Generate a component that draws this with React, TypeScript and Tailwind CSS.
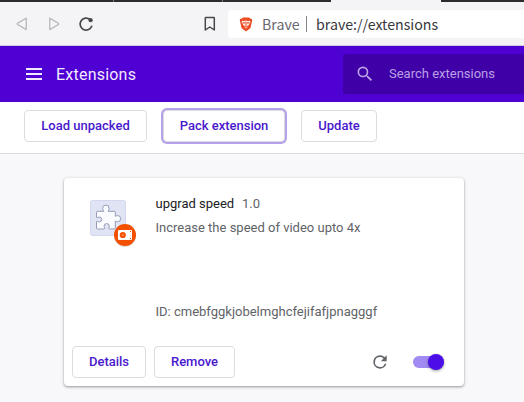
import type { ReactNode } from 'react';

function ActionButton({ children, className = '' }: { children: ReactNode; className?: string }) {
  return (
    <button
      className={`flex h-8 items-center justify-center whitespace-nowrap rounded border border-[#dadce0] bg-white text-[13px] font-medium text-[#4918ce] ${className}`}
    >
      {children}
    </button>
  );
}

function BrowserBar() {
  return (
    <div className="flex h-[46px] flex-col border-b border-[#cfcbe6] bg-[#f4f4f7]">
      <div className="flex h-[2px] shrink-0 bg-[#2c2b2d]">
        <div className="ml-[113px] w-px bg-[#777]" />
        <div className="ml-[108px] w-px bg-[#777]" />
        <div className="ml-[108px] w-[110px] bg-[#f4f4f7]" />
      </div>
      <div className="flex flex-1 items-start pt-2">
        <div className="flex h-7 items-center pl-4">
          <svg width="12" height="14" viewBox="0 0 12 14" fill="none" stroke="#bdbdbf" strokeWidth="1.4" strokeLinejoin="round">
            <path d="M10.3 1.2v11.4L1.8 7.7c-.7-.4-.7-1.1 0-1.5z" />
          </svg>
          <svg className="ml-5" width="12" height="14" viewBox="0 0 12 14" fill="none" stroke="#bdbdbf" strokeWidth="1.4" strokeLinejoin="round">
            <path d="M1.7 1.2v11.4l8.5-4.9c.7-.4.7-1.1 0-1.5z" />
          </svg>
          <svg className="ml-[18px]" width="16" height="16" viewBox="0 0 16 16" fill="none">
            <path d="M12 3.5A6 6 0 1 0 13.7 10.3" stroke="#48484b" strokeWidth="1.7" strokeLinecap="round" />
            <circle cx="12.6" cy="4.2" r="2.1" fill="#48484b" />
          </svg>
          <svg className="ml-[110px]" width="12" height="16" viewBox="0 0 12 16" fill="none">
            <path d="M1.9 1.4h7.8c.4 0 .6.2.6.6v12L5.8 11l-4.5 3V2c0-.4.2-.6.6-.6z" stroke="#48484b" strokeWidth="1.5" strokeLinejoin="round" />
          </svg>
        </div>
        <div className="ml-3 flex h-7 flex-1 items-center rounded-l bg-white pl-[11px] font-['Noto_Sans_CJK_SC',sans-serif] text-[14.2px] leading-7">
          <svg width="14" height="15" viewBox="0 0 14 15">
            <path d="M3.8.5h6.4l1.1 1.2 1.2-.1.8 1.8-.4 1L11.5 11 7 14.5 2.5 11 1.1 4.4l-.4-1 .8-1.8 1.2.1z" fill="#ed4b24" />
            <path d="M3.3 3.7l2 .2L7 3.4l1.7.5 2-.2.8 1.3-1.5 2 .1 1-2.1 1 .5 1L7 11.4 5.5 10l.5-1-2.1-1 .1-1-1.5-2z" fill="#fff" opacity=".9" />
            <path d="M3.7 5l2.4.6-.4 1.1-1.3-.2zM10.3 5l-2.4.6.4 1.1 1.3-.2zM6.3 4.7h1.4L7.4 7.5 8 8.5H6l.6-1zM5.8 9.7L7 9.1l1.2.6L7 10.8z" fill="#ed4b24" />
          </svg>
          <span className="ml-[9px] w-9 whitespace-nowrap text-[#67676c]">Brave</span>
          <div className="ml-2 h-4 w-px bg-[#85858a]" />
          <span className="ml-[9px] whitespace-nowrap text-[#38383d]">brave://extensions</span>
        </div>
      </div>
    </div>
  );
}

function Header() {
  return (
    <header className="flex h-14 items-center bg-[#4f00d2] pl-[26px]">
      <svg width="16" height="12" viewBox="0 0 16 12" fill="#f2eaff">
        <path d="M0 0h16v2H0zM0 5h16v2H0zM0 10h16v2H0z" />
      </svg>
      <h1 className="ml-[14px] w-[287px] pt-0.5 text-base font-normal tracking-[0.22px] text-[#f2eaff]">Extensions</h1>
      <div className="flex h-10 flex-1 items-center rounded-l-[2px] bg-[#3f00a8] pl-3">
        <svg width="20" height="20" viewBox="0 0 24 24" fill="#bfa4e8">
          <path d="M15.5 14h-.79l-.28-.27A6.47 6.47 0 0 0 16 9.5 6.5 6.5 0 1 0 9.5 16c1.61 0 3.09-.59 4.23-1.57l.27.28v.79l5 4.99L20.49 19zm-6 0a4.5 4.5 0 1 1 0-9 4.5 4.5 0 0 1 0 9z" />
        </svg>
        <span className="ml-[14px] whitespace-nowrap text-[13px] text-[#bba1e4]">Search extensions</span>
      </div>
    </header>
  );
}

function ExtensionIcon() {
  return (
    <svg className="mt-[18px] ml-[25px] shrink-0" width="50" height="52" viewBox="0 0 50 52">
      <rect x="1.5" y="4.5" width="35" height="35" rx="2" fill="#e0e4f5" stroke="#d1d7ee" />
      <path
        d="M8.3 15.3h6.4c-.8-1-1-2-1-3a3.2 3.2 0 0 1 6.4 0c0 1-.2 2-1 3h6.4c.5 0 .8.3.8.8v4.2c.8-.5 1.4-.7 2.3-.7a3 3 0 0 1 0 6.1c-.9 0-1.5-.2-2.3-.7v7.2c0 .5-.3.8-.8.8h-5.1c-.8 0-.9-.5-.6-1.1.4-.8.5-1.1.5-1.7a2.6 2.6 0 0 0-5.2 0c0 .6.1.9.5 1.7.3.6.2 1.1-.6 1.1H8.3c-.5 0-.8-.3-.8-.8V26c0-.8.5-.9 1.1-.6.8.4 1.1.5 1.7.5a2.4 2.4 0 0 0 0-4.8c-.6 0-.9.1-1.7.5-.6.3-1.1.2-1.1-.6v-4.9c0-.5.3-.8.8-.8z"
        fill="#fafbff"
        stroke="#959cb5"
        strokeWidth="1"
        strokeLinejoin="round"
      />
      <circle cx="36" cy="40" r="11" fill="#000" opacity=".13" />
      <circle cx="36" cy="39" r="11" fill="#f35000" />
      <rect x="29" y="34" width="14" height="10" rx="1" fill="#fff" />
      <circle cx="33.8" cy="39" r="3.1" fill="#f35000" />
      <circle cx="33.8" cy="39" r="1" fill="#f98a55" />
      <path d="M41 35h1v1h-1zM41 42h1v1h-1z" fill="#f35000" />
    </svg>
  );
}

function ExtensionCard() {
  return (
    <section className="mt-6 ml-16 flex h-[208px] w-[400px] flex-col rounded bg-white shadow-[0_1px_2px_rgba(60,64,67,0.35),0_1px_3px_1px_rgba(60,64,67,0.15)]">
      <div className="flex h-40">
        <ExtensionIcon />
        <div className="ml-[16.5px] flex flex-col pt-4 text-[13px] leading-5 text-[#5f6368]">
          <div className="flex h-5 whitespace-nowrap">
            <h2 className="w-[86.5px] font-normal text-[#202124]">upgrad speed</h2>
            <span>1.0</span>
          </div>
          <p className="mt-1 whitespace-nowrap">Increase the speed of video upto 4x</p>
          <p className="mt-16 whitespace-nowrap">ID: cmebfggkjobelmghcfejifafjpnagggf</p>
        </div>
      </div>
      <div className="flex flex-1 items-center pl-2">
        <ActionButton className="w-[74px]">Details</ActionButton>
        <ActionButton className="ml-2 w-[81px]">Remove</ActionButton>
        <svg className="ml-[135px]" width="20" height="20" viewBox="0 0 24 24" fill="#5f6368">
          <path d="M17.65 6.35A7.96 7.96 0 0 0 12 4a8 8 0 1 0 7.73 10h-2.08A6 6 0 1 1 12 6c1.66 0 3.14.69 4.22 1.78L13 11h7V4z" />
        </svg>
        <div className="ml-[23px] flex h-3 w-[31px] items-center justify-end rounded-full bg-[#a18af2]">
          <div className="size-4 rounded-full bg-[#4b0ee8] shadow-[0_1px_3px_rgba(0,0,0,0.4)]" />
        </div>
      </div>
    </section>
  );
}

export default function App() {
  return (
    <div className="h-[402px] w-[524px] overflow-hidden bg-[#f8f8fa] font-[Roboto,sans-serif]">
      <BrowserBar />
      <Header />
      <div className="flex h-[52px] border-b border-[#dddde0] bg-white pt-2 pl-6">
        <ActionButton className="w-[123px]">Load unpacked</ActionButton>
        <ActionButton className="ml-4 w-[122px] border-[#c9bbef] ring-2 ring-[#b5a1e9]">Pack extension</ActionButton>
        <ActionButton className="ml-4 w-[76px]">Update</ActionButton>
      </div>
      <ExtensionCard />
    </div>
  );
}
